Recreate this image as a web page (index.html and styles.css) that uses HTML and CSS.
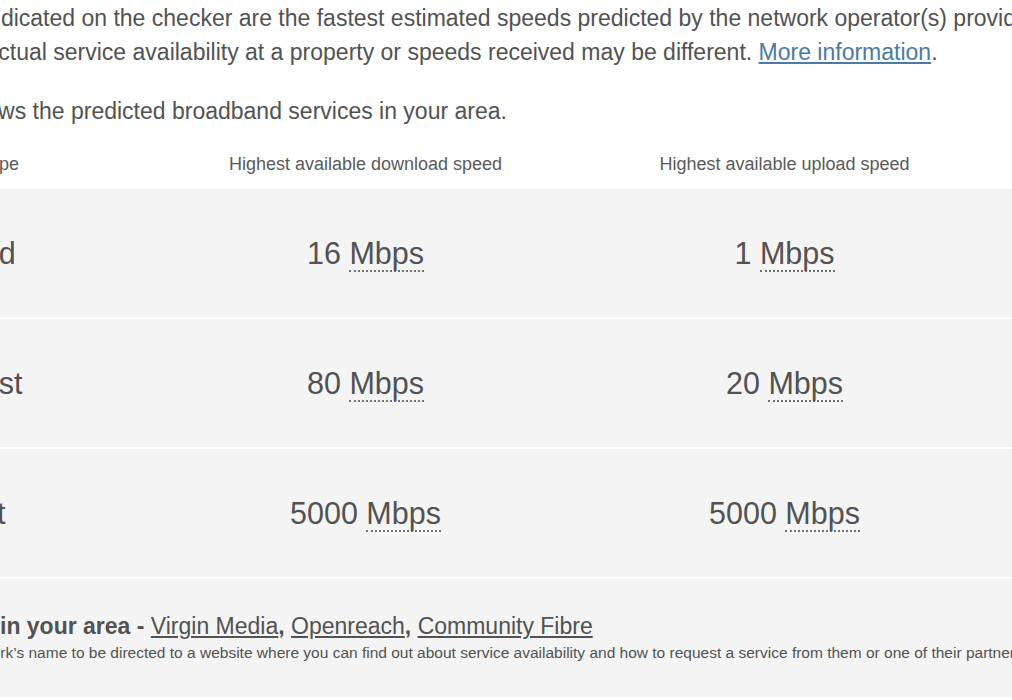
FILE: index.html
```html
<!DOCTYPE html>
<html lang="en">
<head>
<meta charset="utf-8">
<title>Broadband checker</title>
<link rel="stylesheet" href="styles.css">
</head>
<body>
<main class="page">
  <p class="intro">indicated on the checker are the fastest estimated speeds predicted by the network operator(s) providing services in your area.<br>Actual service availability at a property or speeds received may be different. <a class="more" href="#">More information</a>.</p>
  <p class="lead">shows the predicted broadband services in your area.</p>

  <div class="speeds">
    <div class="row head">
      <div class="cell name">Broadband type</div>
      <div class="cell">Highest available download speed</div>
      <div class="cell">Highest available upload speed</div>
    </div>
    <div class="row data">
      <div class="cell name">Standard</div>
      <div class="cell">16 <abbr title="Megabits per second">Mbps</abbr></div>
      <div class="cell">1 <abbr title="Megabits per second">Mbps</abbr></div>
    </div>
    <div class="row data">
      <div class="cell name">Superfast</div>
      <div class="cell">80 <abbr title="Megabits per second">Mbps</abbr></div>
      <div class="cell">20 <abbr title="Megabits per second">Mbps</abbr></div>
    </div>
    <div class="row data">
      <div class="cell name">Ultrafast</div>
      <div class="cell">5000 <abbr title="Megabits per second">Mbps</abbr></div>
      <div class="cell">5000 <abbr title="Megabits per second">Mbps</abbr></div>
    </div>
  </div>

  <section class="operators">
    <h2 class="op-title">in your area - <a href="#">Virgin Media</a>, <a href="#">Openreach</a>, <a href="#">Community Fibre</a></h2>
    <p class="op-note">network’s name to be directed to a website where you can find out about service availability and how to request a service from them or one of their partners.</p>
  </section>
</main>
</body>
</html>
```

FILE: styles.css
```css
html, body {
  margin: 0;
  padding: 0;
  background: #ffffff;
}

body {
  width: 1012px;
  height: 700px;
  overflow: hidden;
  font-family: "Liberation Sans", Arial, sans-serif;
  color: #525252;
}

.page {
  display: flex;
  flex-direction: column;
  padding-top: 1px;
}

.intro {
  margin: 0 0 0 -17px;
  font-size: 23px;
  line-height: 34px;
  white-space: nowrap;
}

.more {
  color: #4a7aa6;
  text-decoration: underline;
  text-underline-offset: 2px;
}

.lead {
  margin: 25px 0 0 -39px;
  font-size: 23px;
  line-height: 34px;
  white-space: nowrap;
}

.speeds {
  display: flex;
  flex-direction: column;
  gap: 2px;
  margin-left: -130px;
}

.row {
  display: grid;
  grid-template-columns: 286px 419px 419px 1fr;
  align-items: center;
}

.cell {
  text-align: center;
  white-space: nowrap;
}

.cell.name {
  text-align: left;
  padding-left: 22px;
}

.head {
  padding: 24px 0 11px;
  font-size: 18px;
  line-height: 24px;
  color: #5a5a5a;
}

.data {
  height: 128px;
  background: #f4f4f4;
  font-size: 30.5px;
  line-height: 36px;
}

abbr {
  text-decoration: none;
  border-bottom: 2px dotted #707070;
}

.operators {
  margin-top: 2px;
  height: 118px;
  box-sizing: border-box;
  padding-top: 33px;
  background: #f4f4f4;
}

.op-title {
  margin: 0;
  font-size: 23px;
  line-height: 28px;
  font-weight: bold;
  white-space: nowrap;
}

.op-title a {
  font-weight: normal;
  color: #525252;
  text-decoration: underline;
  text-underline-offset: 2px;
}

.op-note {
  margin: 2px 0 0 -41px;
  font-size: 15.5px;
  line-height: 22px;
  white-space: nowrap;
}
```
